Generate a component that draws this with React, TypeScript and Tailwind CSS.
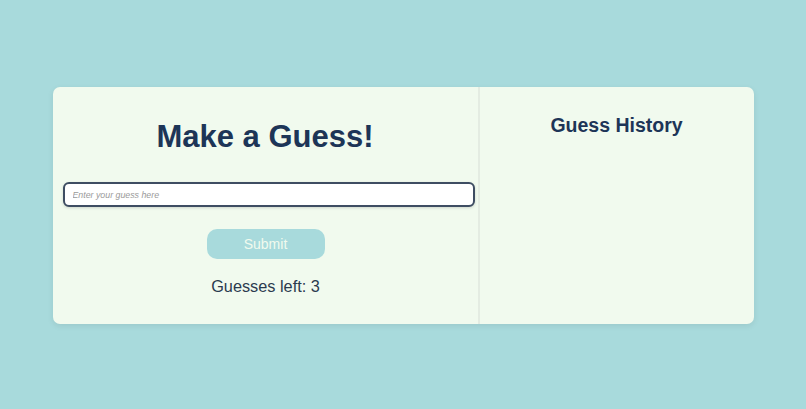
import { useState } from "react";

export default function App() {
  const [guess, setGuess] = useState("");
  const guessesLeft = 3;

  return (
    <main
      className="min-h-screen w-full flex items-center justify-center bg-[#a8dadc]"
      style={{ fontFamily: '"Liberation Sans", Arial, sans-serif' }}
    >
      <div className="mt-[2px] w-[701px] h-[237px] flex rounded-[7px] bg-[#f1faee] shadow-[0_2px_6px_rgba(0,0,0,0.08)] overflow-hidden">
        {/* left: guess form */}
        <section className="w-[427px] shrink-0 flex flex-col items-center pt-[32px] border-r-2 border-[#e4ece2]">
          <h1 className="text-[31px] leading-[36px] font-bold text-[#1d3557]">Make a Guess!</h1>
          <input
            value={guess}
            onChange={(e) => setGuess(e.target.value)}
            placeholder="Enter your guess here"
            className="self-start ml-[10px] mt-[27px] w-[412px] h-[25px] px-[8px] rounded-[6px] border-2 border-[#3e4d62] bg-white text-[9px] italic text-[#1d3557] placeholder:text-[#9a9a9a] outline-none shadow-[0_1px_3px_rgba(0,0,0,0.15)]"
            style={{ fontSize: "8.8px" }}
          />
          <button className="mt-[22px] ml-[1px] w-[118px] h-[30px] pt-[1px] rounded-[10px] bg-[#a8dadc] text-[14px] text-[#f1faee]">
            Submit
          </button>
          <p className="mt-[17px] ml-[1px] text-[16.3px] leading-[20px] text-[#2b3a4e]">Guesses left: {guessesLeft}</p>
        </section>

        {/* right: history */}
        <section className="flex-1 flex flex-col items-center pt-[26px]">
          <h2 className="text-[19.5px] leading-[24px] font-bold text-[#1d3557]">Guess History</h2>
        </section>
      </div>
    </main>
  );
}
